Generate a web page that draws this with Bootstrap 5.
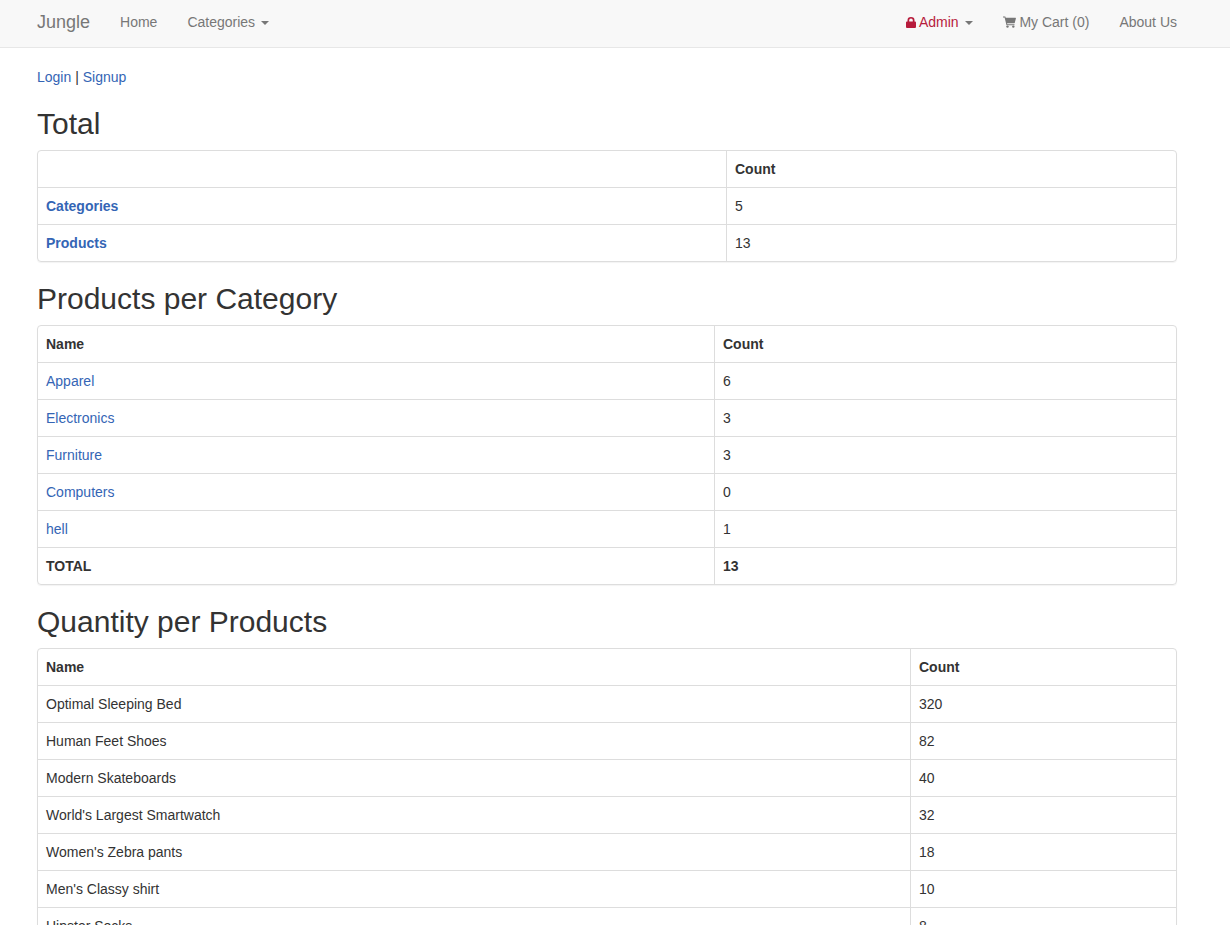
<!DOCTYPE html>
<html lang="en">
<head>
<meta charset="utf-8">
<title>Jungle</title>
<link rel="stylesheet" href="https://cdn.jsdelivr.net/npm/bootstrap@5.3.0/dist/css/bootstrap.min.css">
<style>
:root{--bs-body-font-family:"Liberation Sans",Arial,sans-serif;--bs-body-font-size:14px;--bs-body-line-height:20px;--bs-body-color:#333;--bs-border-color:#ddd}
body{font-family:"Liberation Sans",Arial,sans-serif;font-size:14px;line-height:20px;color:#333}
a{color:#3465b5;text-decoration:none}
.jg-nav{background:#f8f8f8;border-bottom:1px solid #e7e7e7;height:48px;padding:0;margin-bottom:19px;flex-wrap:nowrap;align-items:flex-start}
.jg-wrap{width:1170px;margin-left:22px;padding:0 15px;display:flex;justify-content:space-between;align-items:center;height:44px}
.jg-brand{font-size:18px;color:#777;line-height:20px;padding:0;margin-right:15px}
.navbar-expand .navbar-nav .nav-link.jg-link{color:#777;padding:12px 15px;font-size:14px;line-height:20px}
.jg-right{margin-right:-15px}
.navbar-expand .navbar-nav .nav-link.jg-admin{color:#b71c3c}
.jg-caret{display:inline-block;width:0;height:0;margin-left:2px;vertical-align:middle;border-top:4px solid #777;border-left:4px solid transparent;border-right:4px solid transparent}
.jg-ico{display:inline-block;vertical-align:-1px;fill:currentColor}
.jg-main{width:1170px;margin-left:22px;padding:0 15px}
.jg-main p{margin:0 0 10px}
.jg-main h2{font-family:inherit;font-size:30px;line-height:33px;font-weight:500;margin:20px 0 10px;color:#333}
.jg-panel{border:1px solid #ddd;border-radius:4px;box-shadow:0 1px 1px rgba(0,0,0,.05);margin-bottom:20px}
.jg-panel .table{margin:0;--bs-table-color:#333;--bs-table-bg:transparent;--bs-table-border-color:#ddd;border-color:#ddd;border-width:0}
.jg-panel .table>*>tr{border-width:0}
.jg-panel .table>*>*>*{padding:8px;line-height:20px;border-width:0 1px 1px 0;font-size:14px;color:#333}
.jg-panel .table>*>tr>*:last-child{border-right:0}
.jg-panel .table>*:last-child>tr:last-child>*{border-bottom:0}
.jg-panel .table a{color:#3465b5}
.jg-w1{width:688.5px}
.jg-w2{width:676.5px}
.jg-w3{width:872.5px}
</style>
</head>
<body>
<nav class="navbar navbar-expand jg-nav">
  <div class="jg-wrap">
    <div class="d-flex align-items-center">
      <a class="navbar-brand jg-brand" href="#">Jungle</a>
      <ul class="navbar-nav">
        <li class="nav-item"><a class="nav-link jg-link" href="#">Home</a></li>
        <li class="nav-item"><a class="nav-link jg-link" href="#">Categories <span class="jg-caret"></span></a></li>
      </ul>
    </div>
    <ul class="navbar-nav jg-right">
      <li class="nav-item"><a class="nav-link jg-link jg-admin" href="#"><svg class="jg-ico" width="10" height="11" viewBox="0 0 10 11" aria-hidden="true"><path d="M1.500 4.500V3.200a3.500 3.200 0 0 1 7 0v1.300h.6c.5 0 .9.4.9.9v4.700c0 .5-.4.9-.9.9H.9c-.5 0-.9-.4-.9-.9V5.400c0-.5.4-.9.9-.9zM3.200 4.500h3.600V3.200a1.800 1.600 0 0 0-3.600 0z"/></svg> Admin <span class="jg-caret"></span></a></li>
      <li class="nav-item"><a class="nav-link jg-link" href="#"><svg class="jg-ico" width="13" height="12" viewBox="0 0 13 12" aria-hidden="true"><path d="M0 .5h2.300l.4 1.300h9.800c.3 0 .5.3.4.6l-1.100 4.400c0 .2-.2.400-.5.400H4.100l.2 1h7.200v1H3.500L1.600 1.500H0z"/><circle cx="4.500" cy="10.600" r="1.200"/><circle cx="10.300" cy="10.600" r="1.200"/></svg> My Cart (0)</a></li>
      <li class="nav-item"><a class="nav-link jg-link" href="#">About Us</a></li>
    </ul>
  </div>
</nav>
<main class="jg-main">
  <p><a href="#">Login</a> | <a href="#">Signup</a></p>
  <h2>Total</h2>
  <div class="jg-panel">
    <table class="table table-bordered">
      <thead><tr><th class="jg-w1"></th><th>Count</th></tr></thead>
      <tbody>
        <tr><th><a href="#">Categories</a></th><td>5</td></tr>
        <tr><th><a href="#">Products</a></th><td>13</td></tr>
      </tbody>
    </table>
  </div>
  <h2>Products per Category</h2>
  <div class="jg-panel">
    <table class="table table-bordered">
      <thead><tr><th class="jg-w2">Name</th><th>Count</th></tr></thead>
      <tbody>
        <tr><td><a href="#">Apparel</a></td><td>6</td></tr>
        <tr><td><a href="#">Electronics</a></td><td>3</td></tr>
        <tr><td><a href="#">Furniture</a></td><td>3</td></tr>
        <tr><td><a href="#">Computers</a></td><td>0</td></tr>
        <tr><td><a href="#">hell</a></td><td>1</td></tr>
        <tr><th>TOTAL</th><th>13</th></tr>
      </tbody>
    </table>
  </div>
  <h2>Quantity per Products</h2>
  <div class="jg-panel">
    <table class="table table-bordered">
      <thead><tr><th class="jg-w3">Name</th><th>Count</th></tr></thead>
      <tbody>
        <tr><td>Optimal Sleeping Bed</td><td>320</td></tr>
        <tr><td>Human Feet Shoes</td><td>82</td></tr>
        <tr><td>Modern Skateboards</td><td>40</td></tr>
        <tr><td>World's Largest Smartwatch</td><td>32</td></tr>
        <tr><td>Women's Zebra pants</td><td>18</td></tr>
        <tr><td>Men's Classy shirt</td><td>10</td></tr>
        <tr><td>Hipster Socks</td><td>8</td></tr>
      </tbody>
    </table>
  </div>
</main>
<script src="https://cdn.jsdelivr.net/npm/bootstrap@5.3.0/dist/js/bootstrap.bundle.min.js"></script>
</body>
</html>
